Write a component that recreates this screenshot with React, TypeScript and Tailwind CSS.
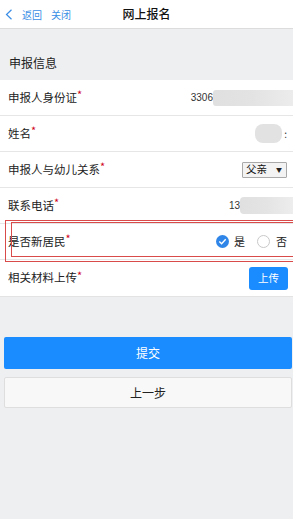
import React from "react";

const F = { fontFamily: '"Noto Sans CJK SC", "Noto Sans", sans-serif' };

function Star() {
  return <span className="text-[#d0021b] text-[11px] leading-none relative -top-[3px]">*</span>;
}

function Row({ label, children, last }: { label: string; children?: React.ReactNode; last?: boolean }) {
  return (
    <div className={"relative h-[36px] flex items-center justify-between pl-[8px] " + (last ? "" : "border-b border-[#e6e6e6]")}>
      <div className="text-[11.5px] text-[#222] flex items-center">
        {label}
        <Star />
      </div>
      <div className="flex items-center h-full">{children}</div>
    </div>
  );
}

export default function App() {
  return (
    <div className="w-[293px] h-[519px] overflow-hidden bg-[#eeeff1]" style={F}>
      {/* header */}
      <div className="h-[29px] bg-white border-b border-[#dcdcdc] grid grid-cols-[1fr_auto_1fr] items-center">
        <div className="flex items-center text-[#3a8ee6] text-[10px] pl-[5px]">
          <svg width="8" height="11" viewBox="0 0 8 11" className="mr-[9px]">
            <path d="M6.5 0.8 L1.5 5.5 L6.5 10.2" fill="none" stroke="#3a8ee6" strokeWidth="1.2" />
          </svg>
          <span>返回</span>
          <span className="ml-[9px]">关闭</span>
        </div>
        <div className="text-[12px] text-[#111] font-medium">网上报名</div>
        <div />
      </div>

      {/* section title */}
      <div className="h-[51px] pt-[16px] pl-[9px] flex items-center text-[12px] text-[#222]">申报信息</div>

      {/* form */}
      <div className="bg-white border-b border-[#e3e3e3]">
        <Row label="申报人身份证">
          <span className="text-[10px] text-[#333]" style={{ fontFamily: '"Liberation Sans", sans-serif' }}>3306</span>
          <div className="w-[80px] h-[16px] bg-gradient-to-r from-[#e0e0e0] via-[#e3e3e3] to-[#ececec] rounded-l-[3px] blur-[0.5px]" />
        </Row>
        <Row label="姓名">
          <div className="w-[27px] h-[19px] bg-[#e2e2e2] rounded-[8px] blur-[0.5px]" />
          <span className="text-[10px] text-[#333] mr-[6px] ml-[2px]">:</span>
        </Row>
        <Row label="申报人与幼儿关系">
          <div className="mr-[6px] w-[45px] h-[16px] border border-[#a9a9a9] bg-[#f3f3f3] flex items-center justify-between pl-[3px] pr-[4px] rounded-[1px]">
            <span className="text-[10.5px] text-[#111] leading-none">父亲</span>
            <span className="text-[6px] text-[#222] leading-none">▼</span>
          </div>
        </Row>
        <Row label="联系电话">
          <span className="text-[10px] text-[#333]" style={{ fontFamily: '"Liberation Sans", sans-serif' }}>13</span>
          <div className="w-[53px] h-[17px] bg-gradient-to-r from-[#e0e0e0] via-[#e4e4e4] to-[#ededed] rounded-l-[4px] blur-[0.5px]" />
        </Row>
        <div className="relative">
          <Row label="是否新居民">
            <div className="flex items-center mr-[6px] text-[11px] text-[#222]">
              <svg width="13" height="13" viewBox="0 0 13 13">
                <circle cx="6.5" cy="6.5" r="6.5" fill="#2f86e8" />
                <path d="M3.3 6.6 L5.6 8.8 L9.7 4.3" fill="none" stroke="white" strokeWidth="1.4" />
              </svg>
              <span className="ml-[5px]">是</span>
              <svg width="13" height="13" viewBox="0 0 13 13" className="ml-[12px]">
                <circle cx="6.5" cy="6.5" r="6" fill="white" stroke="#c8c8c8" strokeWidth="1" />
              </svg>
              <span className="ml-[6px]">否</span>
            </div>
          </Row>
          <div className="absolute left-[5px] -right-[10px] -top-[4px] h-[42px] border border-[#d94a4a] pointer-events-none" />
          <div className="absolute left-[11px] -right-[10px] -top-[2px] h-[35px] border border-[#d94a4a] pointer-events-none" />
        </div>
        <Row label="相关材料上传" last>
          <button className="mr-[5px] w-[39px] h-[23px] bg-[#1a8cff] text-white text-[10.5px] rounded-[3px] flex items-center justify-center">上传</button>
        </Row>
      </div>

      {/* buttons */}
      <div className="pl-[4px] pr-[1px] pt-[40px] flex flex-col gap-[8px]">
        <button className="h-[32px] w-full bg-[#1a8cff] text-white text-[12px] rounded-[2px] flex items-center justify-center">提交</button>
        <button className="h-[31px] w-full bg-[#f8f8f8] border border-[#dedede] text-[#222] text-[12px] rounded-[2px] flex items-center justify-center">上一步</button>
      </div>
    </div>
  );
}
